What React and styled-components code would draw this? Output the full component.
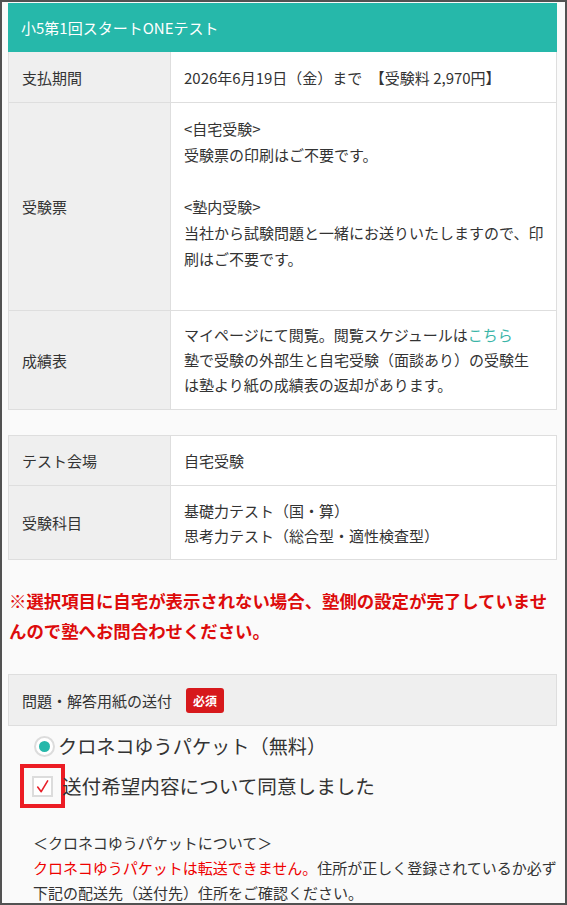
import React from "react";
import styled, { createGlobalStyle } from "styled-components";

const Global = createGlobalStyle`
  html, body { margin: 0; padding: 0; }
  body { font-family: "Noto Sans CJK JP", "Noto Sans", sans-serif; color: #333; }
  * { box-sizing: border-box; }
`;

const Frame = styled.div`
  width: 567px;
  height: 905px;
  border: 2px solid #525252;
  background: #fafafa;
  overflow: hidden;
  padding: 1px 8px 0 6px;
`;

const Table = styled.div`
  border: 1px solid #dedede;
  background: #fff;
  margin-bottom: ${(p) => p.$mb || 0}px;
`;

const Header = styled.div`
  background: #26b8aa;
  color: #fff;
  font-size: 15px;
  height: 49px;
  display: flex;
  align-items: center;
  padding: 0 13px;
  margin: -1px -1px 0;
`;

const Row = styled.div`
  display: grid;
  grid-template-columns: 162px 1fr;
  border-top: ${(p) => (p.$first ? "none" : "1px solid #dedede")};
`;

const Label = styled.div`
  background: #efefef;
  border-right: 1px solid #dedede;
  font-size: 15px;
  line-height: 25px;
  padding: 12px 13px;
  display: flex;
  align-items: center;
`;

const Value = styled.div`
  font-size: 15px;
  line-height: ${(p) => p.$lh || 25}px;
  padding: ${(p) => p.$pad || "13px 6px 12px 13px"};
`;

const Link = styled.span`
  color: #3bb5a8;
`;

const Warning = styled.p`
  margin: 26px 0 28px 1px;
  color: #dd0b0b;
  font-weight: bold;
  font-size: 17.4px;
  line-height: 30px;
`;

const FieldHead = styled.div`
  background: #efefef;
  border: 1px solid #dedede;
  height: 52px;
  display: flex;
  align-items: center;
  gap: 14px;
  padding: 0 13px;
  font-size: 15px;
`;

const Badge = styled.span`
  background: #d7191c;
  color: #fff;
  font-size: 12px;
  font-weight: bold;
  border-radius: 3px;
  padding: 3px 7px;
  line-height: 19px;
`;

const Options = styled.div`
  padding: 7px 0 0 12px;
  display: flex;
  flex-direction: column;
  gap: 5px;
`;

const OptionRow = styled.label`
  display: flex;
  align-items: center;
  font-size: ${(p) => p.$fs || 19.2}px;
  line-height: 26px;
  color: #333;
`;

const Radio = styled.span`
  width: 21px;
  height: 21px;
  border-radius: 50%;
  border: 2px solid #dcdcdc;
  background: #fff;
  display: flex;
  align-items: center;
  justify-content: center;
  margin: 0 3px 0 14px;
  &::after {
    content: "";
    width: 11px;
    height: 11px;
    border-radius: 50%;
    background: #26b8aa;
  }
`;

const Highlight = styled.span`
  border: 4px solid #ec1c24;
  width: 45px;
  height: 44px;
  display: flex;
  align-items: center;
  padding-left: 8px;
  margin-right: -3px;
`;

const CheckBox = styled.span`
  width: 21px;
  height: 21px;
  border: 2px solid #dcdcdc;
  background: #fff;
  display: flex;
  align-items: center;
  justify-content: center;
`;

const Note = styled.div`
  padding: 22px 0 0 25px;
  font-size: 15px;
  line-height: 25px;
`;

const Red = styled.span`
  color: #ee0000;
`;

export default function App() {
  return (
    <>
      <Global />
      <Frame>
        <Table $mb={25}>
          <Header>小5第1回スタートONEテスト</Header>
          <Row $first>
            <Label>支払期間</Label>
            <Value>2026年6月19日（金）まで　【受験料 2,970円】</Value>
          </Row>
          <Row>
            <Label>受験票</Label>
            <Value $lh={26}>
              &lt;自宅受験&gt;
              <br />
              受験票の印刷はご不要です。
              <br />
              <br />
              &lt;塾内受験&gt;
              <br />
              当社から試験問題と一緒にお送りいたしますので、印刷はご不要です。
              <br />
              <br />
            </Value>
          </Row>
          <Row>
            <Label>成績表</Label>
            <Value $pad="11px 6px 12px 13px">
              マイページにて閲覧。閲覧スケジュールは<Link>こちら</Link>
              <br />
              塾で受験の外部生と自宅受験（面談あり）の受験生
              <br />
              は塾より紙の成績表の返却があります。
            </Value>
          </Row>
        </Table>
        <Table>
          <Row $first>
            <Label>テスト会場</Label>
            <Value $pad="12px 6px 11px 13px">自宅受験</Value>
          </Row>
          <Row>
            <Label>受験科目</Label>
            <Value $pad="12px 6px 11px 13px">
              基礎力テスト（国・算）
              <br />
              思考力テスト（総合型・適性検査型）
            </Value>
          </Row>
        </Table>
        <Warning>
          ※選択項目に自宅が表示されない場合、塾側の設定が完了していませんので塾へお問合わせください。
        </Warning>
        <FieldHead>
          問題・解答用紙の送付<Badge>必須</Badge>
        </FieldHead>
        <Options>
          <OptionRow>
            <Radio />
            クロネコゆうパケット（無料）
          </OptionRow>
          <OptionRow $fs={19.6}>
            <Highlight>
              <CheckBox>
                <svg width="15" height="15" viewBox="0 0 14 14">
                  <path d="M2.5 7.5 L5.8 11.8 L11.8 1.8" fill="none" stroke="#e8202a" strokeWidth="1.5" strokeLinecap="round" strokeLinejoin="round" />
                </svg>
              </CheckBox>
            </Highlight>
            送付希望内容について同意しました
          </OptionRow>
        </Options>
        <Note>
          ＜クロネコゆうパケットについて＞
          <br />
          <Red>クロネコゆうパケットは転送できません。</Red>
          住所が正しく登録されているか必ず下記の配送先（送付先）住所をご確認ください。
        </Note>
      </Frame>
    </>
  );
}
